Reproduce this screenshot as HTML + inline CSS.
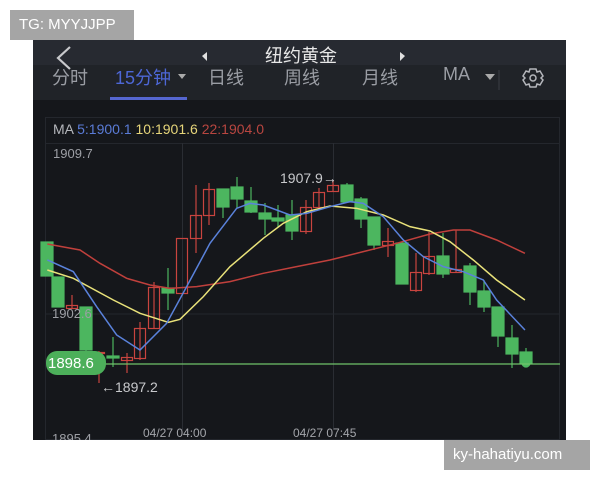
<!DOCTYPE html>
<html><head><meta charset="utf-8"><style>
*{margin:0;padding:0;box-sizing:border-box}
body{width:600px;height:480px;background:#fff;position:relative;overflow:hidden;font-family:"Liberation Sans","Noto Sans CJK SC",sans-serif}
.abs{position:absolute}
.wm{background:#a5a5a5;color:#fff;font-size:15px;line-height:30px;padding-left:9px}
.tab{position:absolute;top:64px;font-size:18px;color:#9a9da4}
</style></head><body>
<div class="abs wm" style="left:10px;top:10px;width:124px;height:30px">TG: MYYJJPP</div>
<div class="abs" style="left:33px;top:40px;width:533px;height:400px;background:#15171b"></div>
<div class="abs" style="left:33px;top:40px;width:533px;height:25px;background:#272a31"></div>
<div class="abs" style="left:33px;top:65px;width:533px;height:35px;background:#202328"></div>
<svg class="abs" style="left:0;top:0" width="600" height="480">
<path d="M70 47 L58 58 L70 69" stroke="#c8c9cc" stroke-width="2.2" fill="none"/>
<path d="M202 56 L207 52 L207 61Z M400 52 L405 56 L400 61Z" fill="#e0e0e0"/>
<path d="M178 74 L186 74 L182 79Z M485 74 L495 74 L490 80Z" fill="#aaa"/>
<line x1="499" y1="70" x2="499" y2="90" stroke="#3a3d44"/>
<g transform="translate(533,78)" stroke="#b5b7bc" stroke-width="1.5" fill="none">
<path d="M-3 -9 L3 -9 L4 -6 L7 -7 L10 -2 L8 0 L10 2 L7 7 L4 6 L3 9 L-3 9 L-4 6 L-7 7 L-10 2 L-8 0 L-10 -2 L-7 -7 L-4 -6Z"/><circle r="3"/></g>
<rect x="110" y="97" width="77" height="3" fill="#5566d0"/>
<rect x="45.5" y="117.5" width="514" height="322" fill="none" stroke="#24272d"/>
<line x1="45" y1="143.5" x2="560" y2="143.5" stroke="#24272d"/>
<line x1="182.5" y1="143" x2="182.5" y2="430" stroke="#2a2d33"/>
<line x1="333.5" y1="143" x2="333.5" y2="430" stroke="#2a2d33"/>
<line x1="45" y1="314" x2="560" y2="314" stroke="#24272d"/>
</svg>
<svg class="abs" style="left:0;top:0" width="600" height="480">
<g stroke-width="1.2">
<g fill="#4cb65f" stroke="#4cb65f">
<rect x="41" y="242" width="12" height="34"/>
<rect x="52" y="277" width="12" height="30"/>
<line x1="86" y1="307" x2="86" y2="363"/><rect x="80" y="307" width="12" height="43"/>
<line x1="113" y1="337" x2="113" y2="367"/><rect x="107" y="356" width="12" height="2"/>
<line x1="168" y1="268" x2="168" y2="310"/><rect x="162" y="288" width="12" height="5"/>
<line x1="223" y1="189" x2="223" y2="218"/><rect x="217" y="189" width="12" height="18"/>
<line x1="237" y1="177" x2="237" y2="208"/><rect x="231" y="187" width="12" height="12"/>
<line x1="251" y1="187" x2="251" y2="213"/><rect x="245" y="201" width="12" height="11"/>
<line x1="265" y1="203" x2="265" y2="235"/><rect x="259" y="213" width="12" height="6"/>
<line x1="278" y1="205" x2="278" y2="227"/><rect x="272" y="218" width="12" height="3"/>
<line x1="292" y1="200" x2="292" y2="240"/><rect x="286" y="215" width="12" height="16"/>
<line x1="347" y1="183" x2="347" y2="203"/><rect x="341" y="185" width="12" height="17"/>
<line x1="361" y1="197" x2="361" y2="228"/><rect x="355" y="199" width="12" height="20"/>
<line x1="374" y1="217" x2="374" y2="250"/><rect x="368" y="217" width="12" height="28"/>
<rect x="396" y="243" width="12" height="41"/>
<line x1="443" y1="233" x2="443" y2="278"/><rect x="437" y="256" width="12" height="18"/>
<line x1="470" y1="263" x2="470" y2="305"/><rect x="464" y="266" width="12" height="26"/>
<line x1="484" y1="280" x2="484" y2="312"/><rect x="478" y="291" width="12" height="16"/>
<line x1="498" y1="307" x2="498" y2="347"/><rect x="492" y="307" width="12" height="29"/>
<line x1="512" y1="325" x2="512" y2="368"/><rect x="506" y="338" width="12" height="16"/>
<line x1="526" y1="348" x2="526" y2="364"/><rect x="520" y="352" width="12" height="11"/>
<circle cx="526" cy="363" r="4"/>
</g>
<g fill="none" stroke="#c9443f">
<line x1="72" y1="295" x2="72" y2="308"/><rect x="66.5" y="305.5" width="11" height="3"/>
<line x1="99" y1="351" x2="99" y2="383"/><rect x="93.5" y="352.5" width="11" height="1"/>
<line x1="127" y1="353" x2="127" y2="373"/><rect x="121.5" y="357.5" width="11" height="3"/>
<line x1="140" y1="322" x2="140" y2="360"/><rect x="134.5" y="328.5" width="11" height="30"/>
<line x1="154" y1="282" x2="154" y2="328"/><rect x="148.5" y="287.5" width="11" height="41"/>
<rect x="176.5" y="238.5" width="11" height="55"/>
<line x1="196" y1="185" x2="196" y2="253"/><rect x="190.5" y="215.5" width="11" height="23"/>
<line x1="209" y1="183" x2="209" y2="225"/><rect x="203.5" y="189.5" width="11" height="26"/>
<line x1="306" y1="200" x2="306" y2="234"/><rect x="300.5" y="207.5" width="11" height="24"/>
<line x1="319" y1="188" x2="319" y2="207"/><rect x="313.5" y="192.5" width="11" height="15"/>
<line x1="333" y1="180" x2="333" y2="191"/><rect x="327.5" y="185.5" width="11" height="6"/>
<line x1="388" y1="228" x2="388" y2="257"/><rect x="382.5" y="241.5" width="11" height="4"/>
<line x1="416" y1="253" x2="416" y2="292"/><rect x="410.5" y="272.5" width="11" height="18"/>
<line x1="429" y1="232" x2="429" y2="275"/><rect x="423.5" y="256.5" width="11" height="17"/>
<line x1="456" y1="230" x2="456" y2="273"/><rect x="450.5" y="269.5" width="11" height="3"/>
</g>
</g>
<g fill="none" transform="translate(30,160) scale(0.3333)">
<polyline stroke="#c0403c" stroke-width="4.5" points="52,252 150,270 210,310 290,355 360,375 420,385 500,380 600,365 700,340 800,320 900,300 1000,275 1100,250 1200,222 1270,210 1320,210 1400,240 1485,280"/>
<polyline stroke="#e9e27a" stroke-width="4.5" points="52,330 130,355 250,420 330,460 415,487 450,478 520,410 600,320 700,235 760,190 830,155 900,138 980,145 1060,165 1140,200 1200,213 1260,245 1330,300 1400,360 1485,420"/>
<polyline stroke="#5a82db" stroke-width="4.5" points="52,300 130,335 200,440 260,525 330,570 410,490 470,380 540,250 620,145 660,130 700,135 780,165 830,160 900,140 960,125 1000,130 1060,170 1120,240 1180,290 1240,320 1300,335 1360,360 1400,420 1485,510"/>
</g>
<line x1="100" y1="364" x2="560" y2="364" stroke="#6fc26a" stroke-width="1.2"/>
<rect x="46" y="351" width="60" height="24" rx="11" fill="#4caf5a"/>
</svg>
<div class="abs" style="left:0;top:42px;width:600px;text-align:center;font-size:18px;color:#e8e8e8;padding-left:2px">纽约黄金</div>
<div class="tab" style="left:52px">分时</div>
<div class="tab" style="left:115px;color:#4d67d6">15分钟</div>
<div class="tab" style="left:208px">日线</div>
<div class="tab" style="left:284px">周线</div>
<div class="tab" style="left:362px">月线</div>
<div class="tab" style="left:443px">MA</div>
<div class="abs" style="left:53px;top:121px;font-size:14px;color:#b5b7bc">MA <span style="color:#5a7bd6">5:1900.1</span> <span style="color:#e6d57a">10:1901.6</span> <span style="color:#b84640">22:1904.0</span></div>
<div class="abs" style="left:53px;top:146px;font-size:13px;color:#9d9fa5">1909.7</div>
<div class="abs" style="left:52px;top:306px;font-size:13px;color:#9d9fa5">1902.6</div>
<div class="abs" style="left:52px;top:431px;font-size:13px;color:#9d9fa5;height:9px;overflow:hidden">1895.4</div>
<div class="abs" style="left:280px;top:170px;font-size:14px;color:#c8c9cc">1907.9→</div>
<div class="abs" style="left:101px;top:379px;font-size:14px;color:#c8c9cc">←1897.2</div>
<div class="abs" style="left:48px;top:355px;font-size:15px;color:#fff">1898.6</div>
<div class="abs" style="left:143px;top:426px;font-size:12px;color:#a4a6ab">04/27 04:00</div>
<div class="abs" style="left:293px;top:426px;font-size:12px;color:#a4a6ab">04/27 07:45</div>
<div class="abs wm" style="left:444px;top:440px;width:146px;height:30px;font-size:15px">ky-hahatiyu.com</div>
</body></html>
